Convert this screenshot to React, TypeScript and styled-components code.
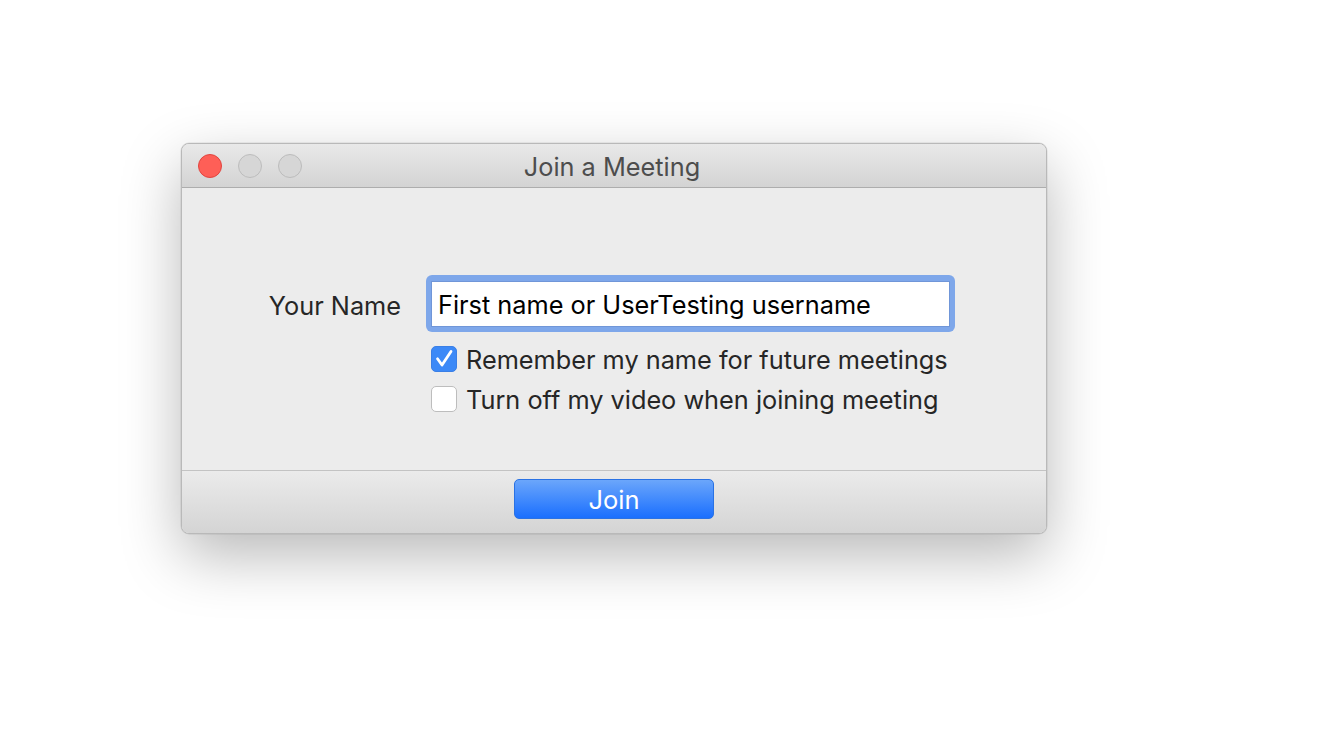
import React from "react";
import styled, { createGlobalStyle } from "styled-components";

const Global = createGlobalStyle`
  html, body { margin: 0; padding: 0; background: #ffffff; }
  body { font-family: Inter, "Noto Sans", "Liberation Sans", sans-serif; }
`;

const Page = styled.div`
  width: 1324px;
  height: 748px;
  padding: 143px 0 0 181px;
  box-sizing: border-box;
  background: #ffffff;
`;

const Window = styled.div`
  width: 866px;
  height: 391px;
  box-sizing: border-box;
  border: 1px solid #b9b9b9;
  border-radius: 8px;
  overflow: hidden;
  display: flex;
  flex-direction: column;
  background: #ececec;
  box-shadow: 0 22px 60px rgba(0, 0, 0, 0.28), 0 0 0 0.5px rgba(0,0,0,0.1);
`;

const TitleBar = styled.div`
  position: relative;
  height: 43px;
  flex: none;
  display: flex;
  align-items: center;
  justify-content: center;
  background: linear-gradient(#e9e9e9, #d3d3d3);
  border-bottom: 1px solid #adadad;
`;

const Lights = styled.div`
  position: absolute;
  left: 16px;
  top: 10px;
  display: flex;
  gap: 16px;
`;

const Light = styled.span<{ $color: string; $border: string }>`
  width: 24px;
  height: 24px;
  border-radius: 50%;
  box-sizing: border-box;
  background: ${(p) => p.$color};
  border: 1px solid ${(p) => p.$border};
`;

const Title = styled.div`
  font-size: 25.3px;
  color: #4d4d4d;
  margin-left: -4px;
  margin-top: 1px;
`;

const Body = styled.div`
  flex: 1;
  display: flex;
  flex-direction: column;
  padding: 87px 0 0 0;
`;

const Row = styled.div`
  display: flex;
  align-items: center;
  gap: 25px;
`;

const Label = styled.div`
  width: 219px;
  flex: none;
  text-align: right;
  padding-top: 3px;
  font-size: 25.3px;
  color: #262626;
`;

const InputRing = styled.div`
  width: 529px;
  height: 57px;
  flex: none;
  box-sizing: border-box;
  border-radius: 6px;
  background: #7ea7ea;
  padding: 6px 5px 5px 5px;
  display: flex;
`;

const Input = styled.div`
  flex: 1;
  background: #ffffff;
  border: 1px solid #7096d8;
  display: flex;
  align-items: center;
  padding-left: 6px;
  font-size: 25.3px;
  color: #000000;
`;

const Checks = styled.div`
  display: flex;
  flex-direction: column;
  gap: 14px;
  margin: 14px 0 0 249px;
`;

const CheckRow = styled.div`
  display: flex;
  align-items: center;
  gap: 9px;
  height: 26px;
  line-height: 26px;
  font-size: 25.3px;
  color: #262626;
`;

const RowText = styled.span`
  padding-top: 2px;
`;

const Box = styled.span<{ $checked?: boolean }>`
  width: 26px;
  height: 26px;
  flex: none;
  box-sizing: border-box;
  border-radius: 5px;
  display: flex;
  align-items: center;
  justify-content: center;
  background: ${(p) => (p.$checked ? "#3c89f7" : "#ffffff")};
  border: 1px solid ${(p) => (p.$checked ? "#3a7fe6" : "#bdbdbd")};
`;

const Footer = styled.div`
  height: 63px;
  flex: none;
  box-sizing: border-box;
  display: flex;
  align-items: flex-start;
  justify-content: center;
  padding-top: 8px;
  border-top: 1px solid #c3c3c3;
  background: linear-gradient(#ebebeb, #d4d4d4);
`;

const JoinButton = styled.button`
  width: 200px;
  height: 40px;
  border: 1px solid #2a72e4;
  border-radius: 5px;
  background: linear-gradient(#6ba6fb, #1a6ffe);
  color: #ffffff;
  font-family: inherit;
  font-size: 25.5px;
  display: flex;
  align-items: center;
  justify-content: center;
  padding: 0;
`;

export default function App() {
  return (
    <Page>
      <Global />
      <Window>
        <TitleBar>
          <Lights>
            <Light $color="#fe5f57" $border="#e1453f" />
            <Light $color="#d6d6d6" $border="#bcbcbc" />
            <Light $color="#d6d6d6" $border="#bcbcbc" />
          </Lights>
          <Title>Join a Meeting</Title>
        </TitleBar>
        <Body>
          <Row>
            <Label>Your Name</Label>
            <InputRing>
              <Input>First name or UserTesting username</Input>
            </InputRing>
          </Row>
          <Checks>
            <CheckRow>
              <Box $checked>
                <svg width="24" height="24" viewBox="1 1 24 24">
                  <path d="M6.5 12.8 L11 19 L20 5.5" fill="none" stroke="#ffffff" strokeWidth="2.8" strokeLinecap="round" strokeLinejoin="round" />
                </svg>
              </Box>
              <RowText>Remember my name for future meetings</RowText>
            </CheckRow>
            <CheckRow>
              <Box />
              <RowText>Turn off my video when joining meeting</RowText>
            </CheckRow>
          </Checks>
        </Body>
        <Footer>
          <JoinButton>Join</JoinButton>
        </Footer>
      </Window>
    </Page>
  );
}
